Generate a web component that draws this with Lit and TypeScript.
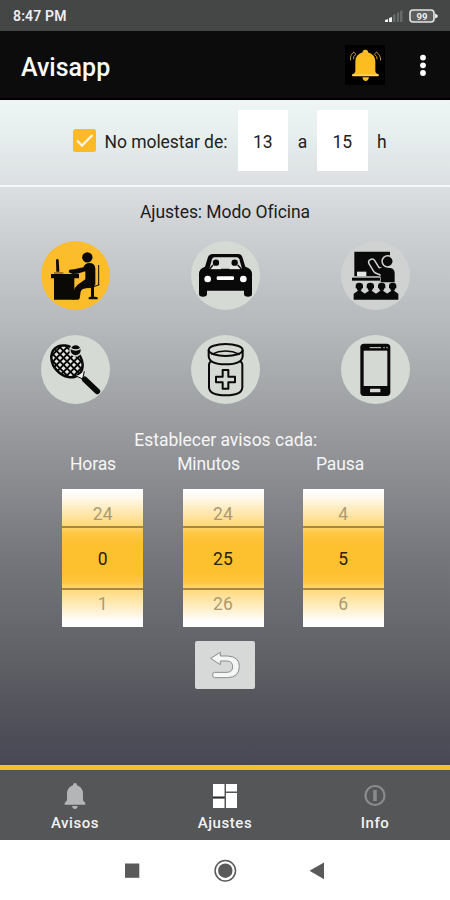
import { LitElement, html, css, svg } from "lit";
import { customElement, property } from "lit/decorators.js";
import { classMap } from "lit/directives/class-map.js";

const office = svg`
  <g fill="#0b0905">
    <circle cx="172" cy="67" r="15.5"/>
    <path d="M78 74q4-4 8 0l2 36h-9z"/>
    <path d="M63 117h84v13h-14v64H72v-64h-9z"/>
    <path d="M72 112h28v4H72z" opacity=".55"/>
    <path d="M116 112l2-8 14-1 28-6q5-13 19-13 15 0 17 16v48q0 4-4 5l-33 9q-5 2-7 8l-3 20q-1 4-5 4h-16l3-25q3-13 12-20l23-16v-24l-24 7-14 1z"/>
    <path d="M183 152h9v36h-9zM176 187q12-5 27 0v6h-27z"/>
    <path d="M206 90v60M158 158q28 4 50-9" fill="none" stroke="#0b0905" stroke-width="3"/>
  </g>`;

const car = svg`
  <path d="M98 57h77q9 0 12 9l9 29q20 6 20 22v60q0 8-12 8t-12-8v-10H81v10q0 8-12 8t-12-8v-60q0-16 18-22l9-29q4-9 14-9z" fill="#090909"/>
  <path d="M103 67h67q6 0 8 6l8 28H88l8-28q2-6 7-6z" fill="#d9dcd8"/>
  <path d="M92 103q0-10 16-12 14 1 16 12zM148 103q1-11 16-12 15 1 17 12z" fill="#e4e6e2"/>
  <circle cx="108" cy="83" r="9.500" fill="#090909"/><circle cx="164" cy="83" r="9.500" fill="#090909"/>
  <path d="M99 90l-10 12M173 90l11 12" stroke="#090909" stroke-width="4"/>
  <path d="M80 104h113v8H80z" fill="#090909"/>
  <circle cx="83" cy="132" r="10" fill="#fff"/><circle cx="190" cy="132" r="10" fill="#fff"/>
  <rect x="110" y="124" width="52" height="11" rx="4" fill="#fff"/>`;

const person = (x: number) => svg`
  <path transform="translate(${x} 0)" d="M-11 152q0-9 11-9t11 9v8h-3q-1 5-4 7l13 9v18h-34v-18l13-9q-3-2-4-7h-3z"/>`;

const classroom = svg`
  <path d="M73 50h107v12h-5v63H73z" fill="#090909"/>
  <path d="M81 110h28v14H81z" fill="#e4e6e6"/>
  <path d="M66 124h84v3H66z" fill="#d0d3d3"/>
  <path d="M66 128h84v9H66z" fill="#090909"/>
  <path d="M126 82l14 23 20 8" fill="none" stroke="#d0d3d3" stroke-width="24" stroke-linecap="round" stroke-linejoin="round"/>
  <path d="M126 82l14 23 20 8" fill="none" stroke="#090909" stroke-width="15" stroke-linecap="round" stroke-linejoin="round"/>
  <path d="M150 99h31q13 2 13 16v27h-42v-31z" fill="#090909"/>
  <circle cx="173" cy="79" r="19" fill="#d0d3d3"/><circle cx="173" cy="79" r="14.500" fill="#090909"/>
  <g fill="#090909">${[88, 121, 155, 188].map(person)}</g>`;

const racket = svg`
  <defs><clipPath id="head"><ellipse cx="111" cy="379" rx="53" ry="40" transform="rotate(47 111 379)"/></clipPath></defs>
  <ellipse cx="111" cy="379" rx="53" ry="41" transform="rotate(47 111 379)" fill="#e3e6e1"/>
  <g clip-path="url(#head)" stroke="#090909" stroke-width="5.500">
    ${[-84, -63, -42, -21, 0, 21, 42, 63, 84].map((d) => svg`
      <path d="M${111 + d - 70} ${379 - 70}l140 140M${111 + d + 70} ${379 - 70}l-140 140"/>`)}
  </g>
  <ellipse cx="111" cy="379" rx="53" ry="41" transform="rotate(47 111 379)" fill="none" stroke="#090909" stroke-width="7.500"/>
  <path d="M138 422q11-1 20-10l5 17-7 6z" fill="#eceeea"/>
  <path d="M138 423l20 9 5-23" fill="none" stroke="#090909" stroke-width="3"/>
  <path d="M164 433l38 36" stroke="#090909" stroke-width="17" stroke-linecap="round"/>
  <circle cx="137" cy="346" r="17" fill="#090909" stroke="#d5d9d3" stroke-width="4"/>
  <path d="M122 340q15 10 30 0" fill="none" stroke="#d5d9d3" stroke-width="4"/>`;

const jar = svg`
  <g fill="none" stroke="#090909" stroke-width="6" stroke-linejoin="round">
    <ellipse cx="137" cy="345" rx="51" ry="18"/>
    <path d="M86 345v18q1 25 51 25t51-25v-18" />
    <path d="M94 358q42-20 86 0" stroke-width="4"/>
    <path d="M93 379q-6 3-6 10v67q0 25 50 25t50-25v-67q0-7-6-10"/>
    <path d="M128 405h17v20h20v17h-20v19h-17v-19h-20v-17h20z"/>
  </g>`;

const mobile = svg`
  <rect x="91" y="326" width="90" height="157" rx="11" fill="#090909"/>
  <rect x="101" y="347" width="71" height="106" fill="#d5d9d3"/>
  <path d="M119 338h34M160 338h4M169 338h4" stroke="#d5d9d3" stroke-width="3"/>
  <rect x="120" y="461" width="31" height="11" rx="2" fill="#d5d9d3"/>`;

interface Mode { name: string; art: unknown; row: number; tone: string }

const modes: Mode[] = [
  { name: "Oficina", art: office, row: 0, tone: "active" },
  { name: "Coche", art: car, row: 0, tone: "normal" },
  { name: "Clase", art: classroom, row: 0, tone: "faint" },
  { name: "Deporte", art: racket, row: 1, tone: "normal" },
  { name: "Medicina", art: jar, row: 1, tone: "normal" },
  { name: "Móvil", art: mobile, row: 1, tone: "normal" },
];

@customElement("number-wheel")
export class NumberWheel extends LitElement {
  @property({ type: Array }) values: number[] = [];

  static styles = css`
    :host {
      box-sizing: border-box; width: 81px; height: 138px; display: grid; grid-template-rows: 38px 62px 38px;
      font-size: 17.5px; text-align: center; letter-spacing: 0.1px;
      background: linear-gradient(#fff 0, #fffaf0 8px, #ffdf90 31px, #ffd675 37px, #fec641 45px, #fdc02f 56px, #fdc02f 84px, #fec641 93px, #ffd87b 100px, #ffe093 106px, #fff8e8 127px, #fff 132px);
    }
    .side { color: #ab9a74; line-height: 51px; overflow: hidden; }
    .last { line-height: 31px; }
    .mid { box-sizing: border-box; color: #2c210a; line-height: 63px; border-top: 2px solid #a88742; border-bottom: 2px solid #a88742; margin: -1px 0; height: 64px; }
  `;

  render() {
    const [a, b, c] = this.values;
    return html`
      <div class="side">${a}</div>
      <div class="mid">${b}</div>
      <div class="side last">${c}</div>`;
  }
}

@customElement("app-root")
export class AppRoot extends LitElement {
  static styles = css`
    :host { display: flex; flex-direction: column; width: 450px; height: 900px; overflow: hidden; font-family: Roboto, sans-serif; background: #fff; }
    svg { display: block; flex: none; }
    .status { height: 31px; background: #444746; display: flex; align-items: center; padding: 0 12px 0 13px; color: #eee; }
    .clock { font-size: 14px; font-weight: 600; letter-spacing: 0.15px; flex: 1; line-height: 31px; padding-top: 2px; }
    .signal { margin-right: 6px; }
    .header { box-sizing: border-box; height: 69px; background: #0c0c0c; display: flex; align-items: center; padding: 0 21px 0 21px; border-bottom: 2px solid #000; }
    .title { flex: 1; color: #fafafa; font-size: 25px; font-weight: 500; line-height: 30px; padding-top: 6px; }
    .bell { margin-right: 32px; }
    .content {
      height: 665px; display: flex; flex-direction: column; align-items: center;
      background: linear-gradient(#edf5f5 0, #e6eeee 35px, #dcdfe1 85px, #cdd0d3 135px, #b6b9bc 225px, #9b9da0 320px, #77787d 450px, #5d5e63 570px, #4d4d58 635px, #4a4856 665px);
    }
    .quiet { box-sizing: border-box; align-self: stretch; height: 87px; border-bottom: 2px solid #f6f8f8; display: flex; align-items: flex-start; padding: 10px 0 0 73px; color: #222; font-size: 17.5px; line-height: 64px; }
    .check { margin: 19px 8.5px 0 0; }
    .ask { width: 125px; margin-right: 8px; letter-spacing: -0.05px; white-space: nowrap; }
    .hour { width: 50.5px; height: 61px; background: #fff; text-align: center; }
    .a { width: 29px; text-align: center; }
    .h { padding-left: 9.5px; }
    .mode { margin-top: 12px; height: 25px; line-height: 27px; font-size: 17.5px; color: #1c1c1e; letter-spacing: -0.06px; }
    .modes { margin-top: 17px; display: grid; grid-template-columns: repeat(3, 69px); gap: 25px 81px; }
    .disc { width: 69px; height: 69px; border-radius: 50%; background: #d6dad4; }
    .disc.active { background: #fcbd2c; }
    .disc.faint { background: #d0d2d2; }
    .disc svg { width: 69px; height: 69px; }
    .every { margin: 23px 0 0 1.500px; height: 24px; line-height: 26px; font-size: 17.5px; color: #f6f6f6; letter-spacing: 0; }
    .labels { height: 25px; margin-bottom: 12.5px; line-height: 26px; font-size: 17.5px; letter-spacing: -0.1px; color: #f6f6f6; align-self: stretch; display: grid; grid-template-columns: 107px 124px 139px; padding-left: 39.5px; text-align: center; }
    .wheels { display: flex; gap: 39.3px; margin-right: 4px; }
    .undo { margin: 14.5px 0 0 0.5px; width: 60px; height: 48px; background: #d7d9d9; border-radius: 2px; display: grid; place-items: center; box-shadow: 0 1px 1px #55565a; }
    .tabs { box-sizing: border-box; height: 75px; border-top: 5.5px solid #fcbc35; background: #545658; display: grid; grid-template-columns: repeat(3, 1fr); }
    .tab { display: flex; flex-direction: column; align-items: center; padding-top: 13px; color: #f2f2f2; font-size: 15px; font-weight: 500; letter-spacing: 0.55px; line-height: 22px; }
    .tab svg { margin-bottom: 3px; }
    .sys { height: 60px; background: #fff; }
  `;

  render() {
    return html`
      <div class="status">
        <div class="clock">8:47 PM</div>
        <svg class="signal" width="18" height="14" viewBox="0 0 18 14">
          <path d="M0 13v-2l3-1v3zM4 13V9l3-1v5z" fill="#f2f2f2"/>
          <path d="M8 13V6l2.500-1v8zM12 13V4l2-1v10zM15 13V2l2.500-1v12z" fill="#666a69"/>
        </svg>
        <svg width="29" height="14" viewBox="0 0 29 14">
          <rect x="1" y="1" width="24" height="12" rx="3" fill="#5d605f" stroke="#e4e4e4" stroke-width="1.600"/>
          <path d="M26 4.500q3 1 3 2.500t-3 2.500z" fill="#e4e4e4"/>
          <text x="13" y="10.500" text-anchor="middle" font-family="Roboto" font-size="9.500" font-weight="700" fill="#f0f0f0">99</text>
        </svg>
      </div>
      <div class="header">
        <div class="title">Avisapp</div>
        <svg class="bell" width="40" height="40" viewBox="361 136 120 120">
          <path d="M361 136h120v120H361z" fill="#000"/>
          <path d="M383 230v-6q9-3 9-11v-28q0-20 22-27-1-8 8-8t8 8q22 7 22 27v28q0 8 9 11v6z" fill="#fdbc1f"/>
          <path d="M383 224h79v5h-79z" fill="#ffd35c"/>
          <path d="M413 233h20q-2 11-10 11t-10-11z" fill="#fdbc1f"/>
          <path d="M388 157q-13 9-10 25M394 164q-10 5-7 15M387 157l7 7M455 157q13 9 13 25M449 164q10 5 8 15M456 157l-7 7" fill="none" stroke="#c9973a" stroke-width="3"/>
        </svg>
        <svg width="12" height="24" viewBox="0 0 12 24">
          <circle cx="6" cy="4.600" r="2.900" fill="#fff"/><circle cx="6" cy="12.300" r="2.900" fill="#fff"/><circle cx="6" cy="20" r="2.900" fill="#fff"/>
        </svg>
      </div>
      <div class="content">
        <div class="quiet">
          <svg class="check" width="23" height="23" viewBox="0 0 23 23">
            <rect width="23" height="23" rx="2.500" fill="#fcba28"/>
            <path d="M4 11.500l5 5L19.500 6" fill="none" stroke="#fff6e0" stroke-width="2.300"/>
          </svg>
          <div class="ask">No molestar de:</div>
          <div class="hour">13</div>
          <div class="a">a</div>
          <div class="hour">15</div>
          <div class="h">h</div>
        </div>
        <div class="mode">Ajustes: Modo Oficina</div>
        <div class="modes">
          ${modes.map((m) => html`
            <div class=${classMap({ disc: true, [m.tone]: true })}>
              <svg viewBox=${m.row ? "33 300 207 207" : "33 18 207 207"}>${m.art}</svg>
            </div>`)}
        </div>
        <div class="every">Establecer avisos cada:</div>
        <div class="labels"><span>Horas</span><span>Minutos</span><span>Pausa</span></div>
        <div class="wheels">
          <number-wheel .values=${[24, 0, 1]}></number-wheel>
          <number-wheel .values=${[24, 25, 26]}></number-wheel>
          <number-wheel .values=${[4, 5, 6]}></number-wheel>
        </div>
        <div class="undo">
          <svg width="32" height="28" viewBox="480 692 96 84">
            <path d="M485 714l29-18v11h22q35 2 35 31 0 33-35 34h-40q-5 0-5-8t5-8h38q17-1 17-17t-17-17h-20v11z" fill="#f4f5f5" stroke="#8a8b8d" stroke-width="3" stroke-linejoin="round"/>
          </svg>
        </div>
      </div>
      <div class="tabs">
        <div class="tab">
          <svg width="22" height="26" viewBox="194 83 66 78">
            <path d="M196 148v-5l7-8v-20q1-20 18-25 0-7 6-7t6 7q17 5 18 25v20l7 8v5zM218 152h17q-1 9-8 9t-9-9z" fill="#b4b5b7"/>
          </svg>
          Avisos
        </div>
        <div class="tab">
          <svg width="26" height="26" viewBox="0 0 26 26">
            <path d="M1 1h11.500v12.500H1zM1 15.800h11.500V25H1zM14 1h11v7.500H14zM14 10h11v15H14z" fill="#fff"/>
            <path d="M1 14.300h11.500" stroke="#222" stroke-width="1"/>
          </svg>
          Ajustes
        </div>
        <div class="tab">
          <svg width="24" height="26" viewBox="0 0 24 26">
            <circle cx="12" cy="12.500" r="9.500" fill="none" stroke="#8a8b8d" stroke-width="2.200"/>
            <path d="M12 7v11" stroke="#8a8b8d" stroke-width="3.500"/>
          </svg>
          Info
        </div>
      </div>
      <svg class="sys" width="450" height="60" viewBox="0 840 450 60">
        <rect x="125" y="863.500" width="14.300" height="14.300" fill="#5a5a5a"/>
        <circle cx="225.300" cy="870.700" r="10.200" fill="none" stroke="#5a5a5a" stroke-width="1.500"/>
        <circle cx="225.300" cy="870.700" r="7.200" fill="#5a5a5a"/>
        <path d="M309.500 870.800l14.500-8.300v16.800z" fill="#5a5a5a"/>
      </svg>`;
  }
}
